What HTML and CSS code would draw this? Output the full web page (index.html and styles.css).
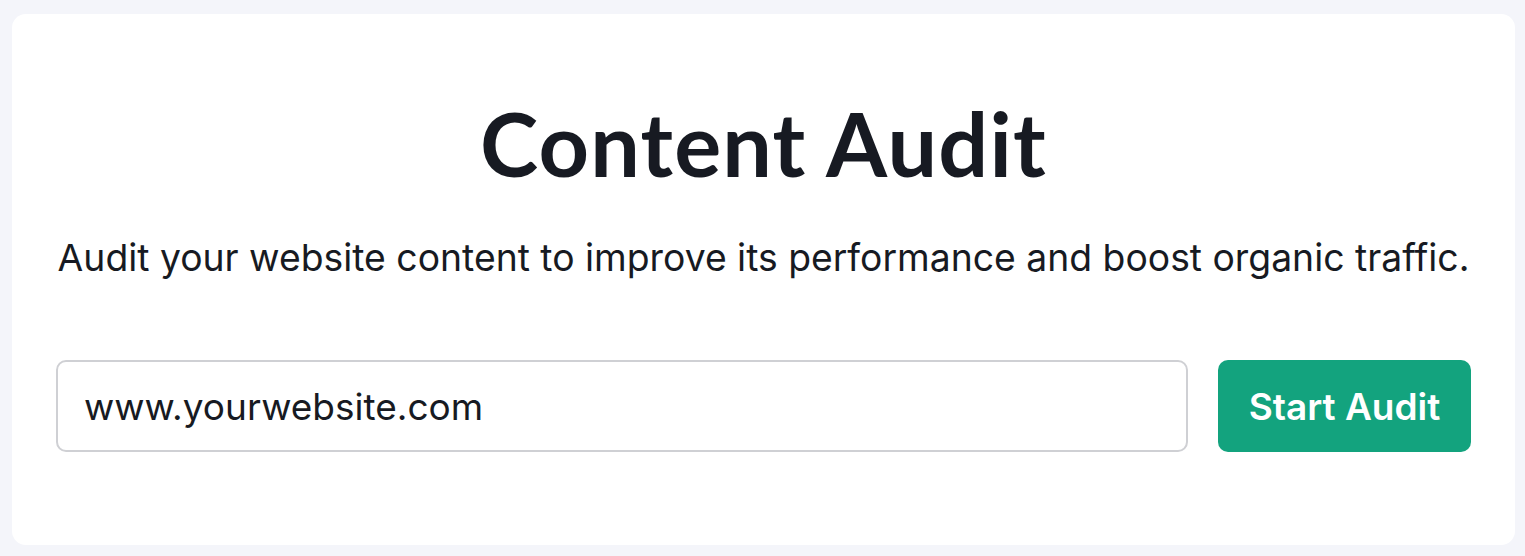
FILE: index.html
```html
<!DOCTYPE html>
<html lang="en">
<head>
<meta charset="utf-8">
<title>Content Audit</title>
<link rel="stylesheet" href="styles.css">
</head>
<body>
<main class="card">
  <h1 class="title">Content Audit</h1>
  <p class="subtitle">Audit your website content to improve its performance and boost organic traffic.</p>
  <form class="audit-form">
    <div class="url-input">www.yourwebsite.com</div>
    <button type="button" class="start-btn">Start Audit</button>
  </form>
</main>
</body>
</html>
```

FILE: styles.css
```css
html, body {
  margin: 0;
  padding: 0;
}
body {
  background: #f4f5fa;
  padding: 14px 10px 11px 12px;
  height: 556px;
  box-sizing: border-box;
  font-family: Inter, "Noto Sans", sans-serif;
  color: #171a22;
}
.card {
  background: #ffffff;
  border-radius: 14px;
  height: 100%;
  box-sizing: border-box;
  padding: 79px 44px 0 44px;
  display: flex;
  flex-direction: column;
  align-items: center;
}
.title {
  margin: 0;
  font-family: Lato, Inter, sans-serif;
  font-weight: 700;
  font-size: 88px;
  line-height: 100px;
  letter-spacing: 1.2px;
  color: #171a22;
}
.subtitle {
  margin: 43px 0 0 0;
  font-size: 37.3px;
  line-height: 44px;
  color: #171a22;
  white-space: nowrap;
}
.audit-form {
  margin-top: 80px;
  display: flex;
  gap: 30px;
  align-self: stretch;
}
.url-input {
  flex: 1;
  height: 92px;
  box-sizing: border-box;
  border: 2px solid #cfd0d4;
  border-radius: 10px;
  padding: 0 26px;
  display: flex;
  align-items: center;
  font-size: 37px;
  color: #171a22;
}
.start-btn {
  width: 253px;
  height: 92px;
  border: none;
  border-radius: 10px;
  background: #13a37e;
  color: #ffffff;
  font-family: Inter, sans-serif;
  font-weight: 600;
  font-size: 37px;
  padding: 0;
}
```
